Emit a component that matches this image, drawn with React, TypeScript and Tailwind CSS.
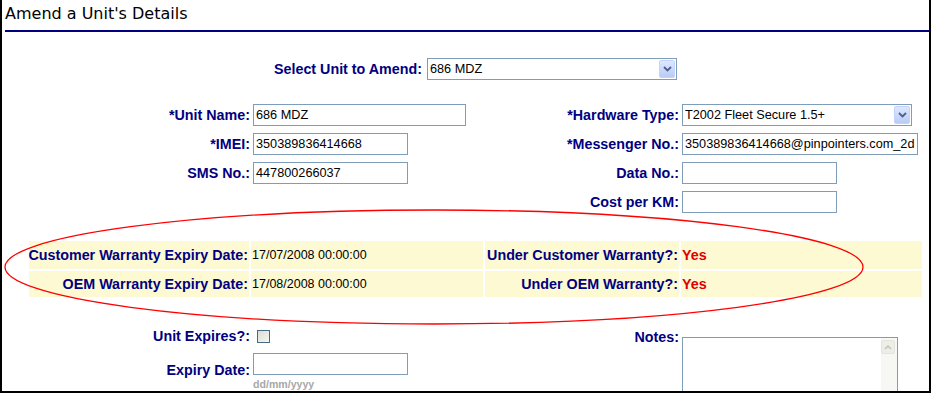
import React from "react";

const label =
  "font-['Liberation_Sans',Arial,sans-serif] font-bold text-[14.3px] leading-[16px] text-[#000080] whitespace-nowrap";
const inputCls =
  "block h-[22px] border border-[#7f9db9] bg-white pl-[2px] pr-[1px] font-['Liberation_Sans',Arial,sans-serif] text-[12.7px] leading-[20px] text-black outline-none";

function Chevron({ color = "#4d6185" }: { color?: string }) {
  return (
    <svg width="9" height="6" viewBox="0 0 9 6">
      <path d="M1 1 L4.5 4.5 L8 1" fill="none" stroke={color} strokeWidth="1.8" />
    </svg>
  );
}

function Select({ value, w }: { value: string; w: string }) {
  return (
    <div className={`${w} flex h-[22px] items-center border border-[#7f9db9] bg-white pl-[2px]`}>
      <span className="flex-1 truncate font-['Liberation_Sans',Arial,sans-serif] text-[12.7px] leading-[20px] text-black">
        {value}
      </span>
      <div className="m-[1px] flex h-[18px] w-[16px] items-center justify-center rounded-[2px] border border-[#c3d3fd] bg-gradient-to-b from-[#dde7fe] to-[#b8cbf8]">
        <Chevron />
      </div>
    </div>
  );
}

function Field({ value = "", w }: { value?: string; w: string }) {
  return <input readOnly value={value} className={`${inputCls} ${w}`} />;
}

function Row({
  l1,
  f1,
  l2,
  f2,
}: {
  l1?: string;
  f1?: React.ReactNode;
  l2?: string;
  f2?: React.ReactNode;
}) {
  return (
    <>
      <div className="flex h-[29px] items-center justify-end pr-[3px]">
        {l1 && <span className={label}>{l1}</span>}
      </div>
      <div className="flex h-[29px] items-center">{f1}</div>
      <div className="flex h-[29px] items-center justify-end pr-[3px]">
        {l2 && <span className={label}>{l2}</span>}
      </div>
      <div className="flex h-[29px] items-center">{f2}</div>
    </>
  );
}

const val = "font-['Liberation_Sans',Arial,sans-serif] text-[12.5px] leading-[16px] text-black";
const yes = "font-['Liberation_Sans',Arial,sans-serif] font-bold text-[14.3px] leading-[16px] text-[#e00000]";

export default function App() {
  return (
    <div className="relative h-[393px] w-[931px] overflow-hidden border-b-2 border-l-2 border-r-2 border-black bg-white text-[14px] leading-[16px]">
      {/* title */}
      <div className="h-[30px] pl-[3px] pt-[4px] font-['DejaVu_Sans',Verdana,sans-serif] text-[16px] leading-[19px] text-black">
        Amend a Unit&apos;s Details
      </div>
      <div className="ml-[3px] h-[2px] bg-[#000080]" />

      {/* select unit */}
      <div className="mt-[26px] flex items-center">
        <div className="flex w-[420px] justify-end">
          <span className={label}>Select Unit to Amend:</span>
        </div>
        <div className="ml-[5px]">
          <Select value="686 MDZ" w="w-[250px]" />
        </div>
      </div>

      {/* main fields */}
      <div className="mt-[20px] grid grid-cols-[251px_232px_197px_1fr]">
        <Row
          l1="*Unit Name:"
          f1={<Field value="686 MDZ" w="w-[213px]" />}
          l2="*Hardware Type:"
          f2={<Select value="T2002 Fleet Secure 1.5+" w="w-[230px]" />}
        />
        <Row
          l1="*IMEI:"
          f1={<Field value="350389836414668" w="w-[155px]" />}
          l2="*Messenger No.:"
          f2={<Field value="350389836414668@pinpointers.com_2d" w="w-[236px]" />}
        />
        <Row
          l1="SMS No.:"
          f1={<Field value="447800266037" w="w-[155px]" />}
          l2="Data No.:"
          f2={<Field w="w-[155px]" />}
        />
        <Row l2="Cost per KM:" f2={<Field w="w-[155px]" />} />
      </div>

      {/* warranty table */}
      <div className="ml-[27px] mt-[25px] grid w-[893px] grid-cols-[220px_232px_194px_241px] gap-[2px]">
        <div className="flex h-[28px] items-center justify-end bg-[#fdf9d3] pr-[1px]">
          <span className={label}>Customer Warranty Expiry Date:</span>
        </div>
        <div className="flex h-[28px] items-center bg-[#fdf9d3] pl-[1px]">
          <span className={val}>17/07/2008 00:00:00</span>
        </div>
        <div className="flex h-[28px] items-center justify-end bg-[#fdf9d3] pr-[1px]">
          <span className={label}>Under Customer Warranty?:</span>
        </div>
        <div className="flex h-[28px] items-center bg-[#fdf9d3] pl-[1px]">
          <span className={yes}>Yes</span>
        </div>
        <div className="flex h-[26px] items-center justify-end bg-[#fdf9d3] pr-[1px]">
          <span className={label}>OEM Warranty Expiry Date:</span>
        </div>
        <div className="flex h-[26px] items-center bg-[#fdf9d3] pl-[1px]">
          <span className={val}>17/08/2008 00:00:00</span>
        </div>
        <div className="flex h-[26px] items-center justify-end bg-[#fdf9d3] pr-[1px]">
          <span className={label}>Under OEM Warranty?:</span>
        </div>
        <div className="flex h-[26px] items-center bg-[#fdf9d3] pl-[1px]">
          <span className={yes}>Yes</span>
        </div>
      </div>

      {/* lower section */}
      <div className="mt-[25px] flex">
        <div className="w-[483px]">
          <div className="flex h-[28px] items-center">
            <div className="flex w-[251px] justify-end pr-[3px]">
              <span className={label}>Unit Expires?:</span>
            </div>
            <div className="ml-[4px] h-[13px] w-[13px] border border-[#4a6a82] bg-gradient-to-br from-[#dcdcd6] to-[#f6f6f2]" />
          </div>
          <div className="flex items-center">
            <div className="flex w-[251px] justify-end pr-[3px]">
              <span className={label}>Expiry Date:</span>
            </div>
            <div className="pt-[3px]">
              <Field w="w-[155px]" />
              <div className="mt-[3px] font-['Liberation_Sans',Arial,sans-serif] text-[10.6px] font-bold leading-[12px] text-[#a8a8a8]">
                dd/mm/yyyy
              </div>
            </div>
          </div>
        </div>
        <div className="flex items-start">
          <div className="flex w-[197px] justify-end pr-[3px] pt-[7px]">
            <span className={label}>Notes:</span>
          </div>
          <div className="mt-[15px] flex h-[80px] w-[216px] border border-[#7f9db9] bg-white">
            <div className="flex-1" />
            <div className="w-[16px] bg-[#f7f7f3]">
              <div className="mt-[2px] flex h-[14px] w-[14px] items-center justify-center rounded-[2px] border border-[#e4e4de] bg-[#eeeee8]">
                <svg width="8" height="5" viewBox="0 0 8 5">
                  <path d="M1 4 L4 1 L7 4" fill="none" stroke="#c4c4bc" strokeWidth="1.5" />
                </svg>
              </div>
            </div>
          </div>
        </div>
      </div>

      {/* red annotation ellipse */}
      <svg
        className="pointer-events-none absolute left-0 top-0"
        width="931"
        height="393"
        viewBox="0 0 931 393"
      >
        <ellipse cx="432" cy="267" rx="429" ry="57" fill="none" stroke="#ff0000" strokeWidth="1.3" />
      </svg>
    </div>
  );
}
